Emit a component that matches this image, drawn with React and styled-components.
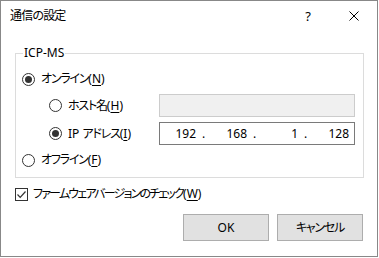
import React from "react";
import styled, { createGlobalStyle } from "styled-components";

const GlobalStyle = createGlobalStyle`
  html, body {
    margin: 0;
    padding: 0;
    background: #ffffff;
  }
  body {
    font-family: "Noto Sans", "Noto Sans CJK JP", sans-serif;
    font-size: 12px;
    color: #000000;
    font-feature-settings: "palt";
  }
`;

const Window = styled.div`
  box-sizing: border-box;
  width: 378px;
  height: 257px;
  border: 1px solid #888888;
  background: #ffffff;
  display: flex;
  flex-direction: column;
`;

const TitleBar = styled.div`
  height: 30px;
  display: flex;
  align-items: center;
  padding-left: 9px;
`;

const Title = styled.div`
  flex: 1;
  font-size: 12px;
  line-height: 16px;
`;

const CaptionButton = styled.div`
  width: 46px;
  height: 30px;
  display: flex;
  align-items: center;
  justify-content: center;
  font-size: 13px;
`;

const Content = styled.div`
  padding: 0 13px 0 14px;
  display: flex;
  flex-direction: column;
`;

const GroupBox = styled.div`
  position: relative;
  margin-top: 22px;
  border: 1px solid #dcdcdc;
  padding: 15px 0 7px 6px;
  display: flex;
  flex-direction: column;
  gap: 5px;
`;

const GroupLabel = styled.div`
  position: absolute;
  top: -9px;
  left: 7px;
  padding: 0 1px;
  line-height: 16px;
  background: #ffffff;
`;

const OptionRow = styled.div`
  display: flex;
  align-items: center;
  height: ${(p) => p.$height || 20}px;
  padding-left: ${(p) => p.$indent || 0}px;
`;

const Choice = styled.label`
  display: flex;
  align-items: center;
  gap: 6px;
  width: ${(p) => (p.$width ? `${p.$width}px` : "auto")};
  flex: none;
  line-height: 16px;
  white-space: nowrap;
`;

const Radio = styled.span`
  position: relative;
  box-sizing: border-box;
  width: 13px;
  height: 13px;
  border: 1px solid #333333;
  border-radius: 50%;
  flex: none;
  &::after {
    content: "";
    display: ${(p) => (p.$checked ? "block" : "none")};
    position: absolute;
    left: 2px;
    top: 2px;
    width: 7px;
    height: 7px;
    border-radius: 50%;
    background: #333333;
  }
`;

// Japanese runs are set tighter to match the narrow UI font of the dialog
const Jp = styled.span`
  letter-spacing: ${(p) => p.$spacing ?? -1.2}px;
`;

const Key = styled.span`
  text-decoration: underline;
  text-underline-offset: 2px;
`;

const TextField = styled.div`
  box-sizing: border-box;
  width: 196px;
  height: 23px;
  border: 1px solid ${(p) => (p.$disabled ? "#cccccc" : "#7a7a7a")};
  background: ${(p) => (p.$disabled ? "#f0f0f0" : "#ffffff")};
  display: flex;
  align-items: center;
`;

const Octet = styled.div`
  display: flex;
  align-items: center;
`;

const OctetValue = styled.span`
  width: 36px;
  text-align: right;
`;

const OctetDot = styled.span`
  width: 15px;
  text-align: center;
`;

const CheckRow = styled.label`
  display: flex;
  align-items: center;
  gap: 5px;
  height: 20px;
  margin-top: 6px;
  line-height: 16px;
  white-space: nowrap;
`;

const CheckBox = styled.span`
  box-sizing: border-box;
  width: 13px;
  height: 13px;
  border: 1px solid #333333;
  display: flex;
  align-items: center;
  justify-content: center;
  flex: none;
`;

const ButtonRow = styled.div`
  display: flex;
  justify-content: flex-end;
  gap: 8px;
  margin-top: 10px;
  padding-right: 1px;
`;

const Button = styled.div`
  box-sizing: border-box;
  width: 86px;
  height: 27px;
  border: 1px solid #adadad;
  background: #e1e1e1;
  display: flex;
  align-items: center;
  justify-content: center;
  line-height: 16px;
`;

const octets = ["192", "168", "1", "128"];

const IpField = () => (
  <TextField>
    {octets.map((o, i) => (
      <Octet key={i}>
        <OctetValue>{o}</OctetValue>
        {i < octets.length - 1 && <OctetDot>.</OctetDot>}
      </Octet>
    ))}
  </TextField>
);

const CloseIcon = () => (
  <svg width="10" height="10" viewBox="0 0 10 10">
    <path d="M0.5 0.5 L9.5 9.5 M9.5 0.5 L0.5 9.5" stroke="#000" strokeWidth="1" fill="none" />
  </svg>
);

const CheckMark = () => (
  <svg width="11" height="11" viewBox="0 0 11 11">
    <polyline points="1.5,5.5 4.2,8.3 9.5,2.5" stroke="#333" strokeWidth="1.2" fill="none" />
  </svg>
);

export default function App() {
  return (
    <>
      <GlobalStyle />
      <Window>
        <TitleBar>
          <Title>
            <Jp $spacing={-0.8}>通信の設定</Jp>
          </Title>
          <CaptionButton>?</CaptionButton>
          <CaptionButton>
            <CloseIcon />
          </CaptionButton>
        </TitleBar>
        <Content>
          <GroupBox>
            <GroupLabel>ICP-MS</GroupLabel>
            <OptionRow>
              <Choice>
                <Radio $checked />
                <span>
                  <Jp>オンライン</Jp>(<Key>N</Key>)
                </span>
              </Choice>
            </OptionRow>
            <OptionRow $height={23} $indent={27}>
              <Choice $width={110}>
                <Radio />
                <span>
                  <Jp>ホスト名</Jp>(<Key>H</Key>)
                </span>
              </Choice>
              <TextField $disabled />
            </OptionRow>
            <OptionRow $height={23} $indent={27}>
              <Choice $width={110}>
                <Radio $checked />
                <span>
                  IP <Jp>アドレス</Jp>(<Key>I</Key>)
                </span>
              </Choice>
              <IpField />
            </OptionRow>
            <OptionRow>
              <Choice>
                <Radio />
                <span>
                  <Jp>オフライン</Jp>(<Key>F</Key>)
                </span>
              </Choice>
            </OptionRow>
          </GroupBox>
          <CheckRow>
            <CheckBox>
              <CheckMark />
            </CheckBox>
            <span>
              <Jp $spacing={-1.8}>ファームウェアバージョンのチェック</Jp>(<Key>W</Key>)
            </span>
          </CheckRow>
          <ButtonRow>
            <Button>OK</Button>
            <Button>
              <Jp>キャンセル</Jp>
            </Button>
          </ButtonRow>
        </Content>
      </Window>
    </>
  );
}
